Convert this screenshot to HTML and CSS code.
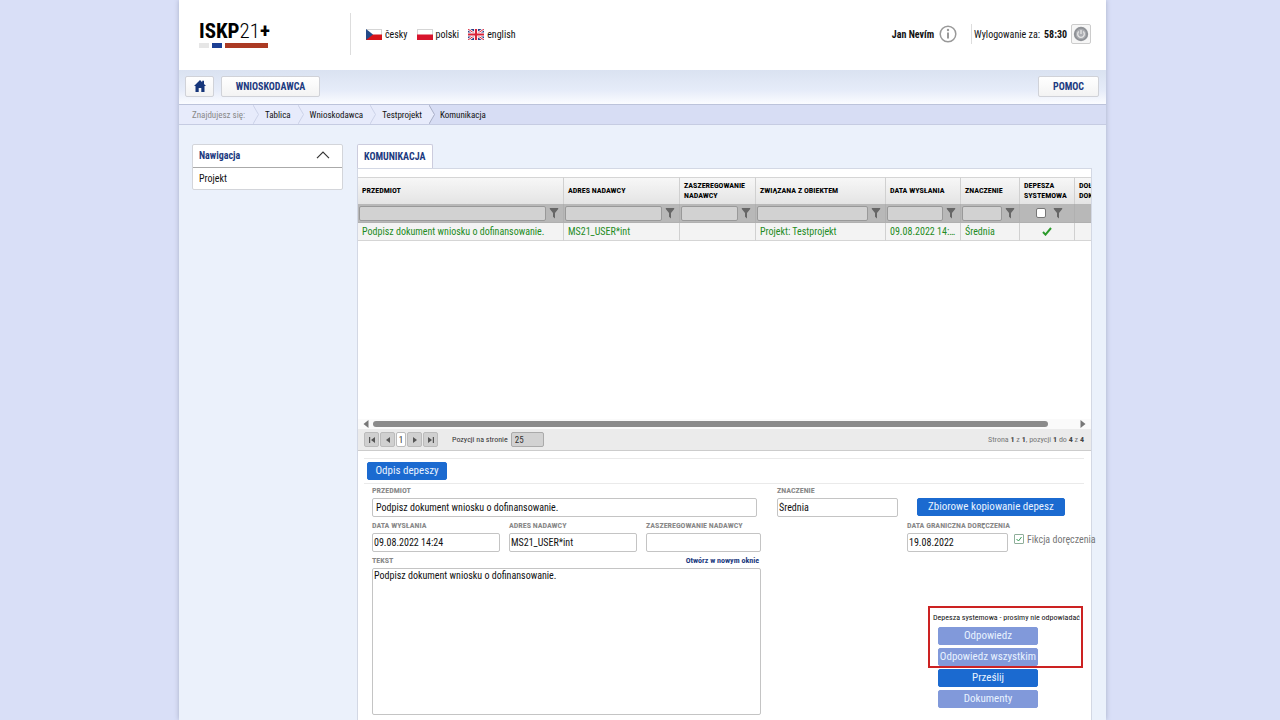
FILE: index.html
```html
<!DOCTYPE html>
<html lang="pl">
<head>
    <meta charset="UTF-8">
    <meta name="viewport" content="width=device-width, initial-scale=1.0">
    <title>ISKP21+</title>
    <link rel="stylesheet" href="styles.css">
</head>
<body>

<svg class="sprite" aria-hidden="true">
    <symbol id="funnel" viewBox="0 0 10 12">
        <path d="M0.8 1h8.4v1L6 6v5.4L4 9.8V6L0.8 2z" fill="#666"/>
    </symbol>
    <symbol id="chevron" viewBox="0 0 6 19">
        <path d="M0 0l5.5 9.5L0 19" fill="#e7ebfb" stroke="currentColor"/>
    </symbol>
</svg>

<div class="page">
    <header class="header">
        <div class="brand">
            <a href="#" class="logo">
                <span class="logo-text">ISKP<span class="logo-thin">21</span>+</span>
                <span class="logo-bars"><i class="bar-grey"></i><i class="bar-blue"></i><i class="bar-red"></i></span>
            </a>
        </div>
        <nav class="languages">
            <a href="#">
                <svg width="16" height="11" viewBox="0 0 16 11"><rect x=".5" y=".5" width="15" height="10" fill="#fff" stroke="#d5d5d5"/><rect y="5.5" width="16" height="5.5" fill="#d7141a"/><path d="M0 0l7 5.5L0 11z" fill="#234a88"/></svg>
                česky
            </a>
            <a href="#">
                <svg width="16" height="11" viewBox="0 0 16 11"><rect x=".5" y=".5" width="15" height="10" fill="#fff" stroke="#d5d5d5"/><rect y="5.5" width="16" height="5.5" fill="#d8142c"/></svg>
                polski
            </a>
            <a href="#">
                <svg width="16" height="11" viewBox="0 0 16 11"><rect width="16" height="11" fill="#2b3f86"/><path d="M0 0l16 11M16 0L0 11" stroke="#fff" stroke-width="2.6"/><path d="M0 0l16 11M16 0L0 11" stroke="#d8233a" stroke-width="1"/><path d="M8 0v11M0 5.5h16" stroke="#fff" stroke-width="4"/><path d="M8 0v11M0 5.5h16" stroke="#d8233a" stroke-width="2.2"/></svg>
                english
            </a>
        </nav>
        <div class="user">
            <b>Jan Nevím</b>
            <svg width="18" height="18" viewBox="0 0 18 18"><circle cx="9" cy="9" r="7.8" fill="#fff" stroke="#999" stroke-width="1.5"/><circle cx="9" cy="5" r="1.2" fill="#999"/><path d="M9 7.4v6" stroke="#999" stroke-width="2"/></svg>
        </div>
        <div class="session">
            <span>Wylogowanie za:</span>
            <b>58:30</b>
            <button class="logout" aria-label="Wyloguj">
                <svg width="16" height="16" viewBox="0 0 16 16"><circle cx="8" cy="8" r="7.2" fill="#8f9297"/><circle cx="8" cy="8" r="5.2" fill="#abadb2"/><path d="M5.8 5.6a3.3 3.3 0 1 0 4.4 0M8 4v4" fill="none" stroke="#e6e6e6" stroke-width="1.3"/></svg>
            </button>
        </div>
    </header>

    <nav class="menu">
        <button class="menu-button home" aria-label="Tablica">
            <svg width="12" height="12" viewBox="0 0 12 12"><path d="M6 0L0 6h1.5v6h3.2V8h2.6v4h3.2V6H12L10 4V.8H8.2v1.4z" fill="#15357a"/></svg>
        </button>
        <button class="menu-button wide">WNIOSKODAWCA</button>
        <button class="menu-button help">POMOC</button>
    </nav>

    <div class="breadcrumb">
        <span class="crumb label">Znajdujesz się:</span><svg width="6" height="19"><use href="#chevron"/></svg>
        <a href="#" class="crumb">Tablica</a><svg width="6" height="19"><use href="#chevron"/></svg>
        <a href="#" class="crumb">Wnioskodawca</a><svg width="6" height="19"><use href="#chevron"/></svg>
        <a href="#" class="crumb">Testprojekt</a><svg class="last" width="6" height="19"><use href="#chevron"/></svg>
        <span class="current">Komunikacja</span>
    </div>

    <div class="content">
        <aside class="sidebar">
            <button class="sidebar-title">
                Nawigacja
                <svg width="14" height="8" viewBox="0 0 14 8"><path d="M1 7.2L7 1.2l6 6" fill="none" stroke="#333" stroke-width="1.2"/></svg>
            </button>
            <a href="#" class="sidebar-item">Projekt</a>
        </aside>

        <main class="main">
            <a href="#" class="tab">KOMUNIKACJA</a>
            <div class="panel">
                <div class="grid">
                    <table>
                        <colgroup>
                            <col class="c-subject"><col class="c-sender"><col class="c-rank"><col class="c-object"><col class="c-date"><col class="c-importance"><col class="c-system"><col class="c-document">
                        </colgroup>
                        <thead>
                            <tr>
                                <th>PRZEDMIOT</th>
                                <th>ADRES NADAWCY</th>
                                <th>ZASZEREGOWANIE NADAWCY</th>
                                <th>ZWIĄZANA Z OBIEKTEM</th>
                                <th>DATA WYSŁANIA</th>
                                <th>ZNACZENIE</th>
                                <th>DEPESZA SYSTEMOWA</th>
                                <th>DOŁĄCZONE DOKUMENTY</th>
                            </tr>
                            <tr class="filters">
                                <td><div class="filter"><input type="text" aria-label="Przedmiot"><svg width="10" height="12"><use href="#funnel"/></svg></div></td>
                                <td><div class="filter"><input type="text" aria-label="Adres nadawcy"><svg width="10" height="12"><use href="#funnel"/></svg></div></td>
                                <td><div class="filter"><input type="text" aria-label="Zaszeregowanie nadawcy"><svg width="10" height="12"><use href="#funnel"/></svg></div></td>
                                <td><div class="filter"><input type="text" aria-label="Związana z obiektem"><svg width="10" height="12"><use href="#funnel"/></svg></div></td>
                                <td><div class="filter"><input type="text" aria-label="Data wysłania"><svg width="10" height="12"><use href="#funnel"/></svg></div></td>
                                <td><div class="filter"><input type="text" aria-label="Znaczenie"><svg width="10" height="12"><use href="#funnel"/></svg></div></td>
                                <td><div class="filter check"><input type="checkbox" aria-label="Depesza systemowa"><svg width="10" height="12"><use href="#funnel"/></svg></div></td>
                                <td><div class="filter check"><input type="checkbox" aria-label="Dołączone dokumenty"></div></td>
                            </tr>
                        </thead>
                        <tbody>
                            <tr>
                                <td>Podpisz dokument wniosku o dofinansowanie.</td>
                                <td>MS21_USER*int</td>
                                <td></td>
                                <td>Projekt: Testprojekt</td>
                                <td>09.08.2022 14:24</td>
                                <td>Średnia</td>
                                <td class="center"><svg width="10" height="9" viewBox="0 0 10 9"><path d="M1 5l2.5 2.6L9 1" fill="none" stroke="#2a9a2a" stroke-width="2"/></svg></td>
                                <td></td>
                            </tr>
                        </tbody>
                    </table>
                </div>
                <div class="scrollbar">
                    <svg width="6" height="8" viewBox="0 0 6 8"><path d="M5.5 0v8L.5 4z" fill="#777"/></svg>
                    <div class="track"><div class="thumb"></div></div>
                    <svg width="6" height="8" viewBox="0 0 6 8"><path d="M.5 0v8l5-4z" fill="#777"/></svg>
                </div>
                <div class="pager">
                    <div class="pages">
                        <button aria-label="Pierwsza"><svg width="8" height="8" viewBox="0 0 8 8"><path d="M1 1h1.2v6H1zM7 1v6L3 4z" fill="#555"/></svg></button>
                        <button aria-label="Poprzednia"><svg width="8" height="8" viewBox="0 0 8 8"><path d="M6 1v6L2 4z" fill="#555"/></svg></button>
                        <button class="active">1</button>
                        <button aria-label="Następna"><svg width="8" height="8" viewBox="0 0 8 8"><path d="M2 1v6l4-3z" fill="#555"/></svg></button>
                        <button aria-label="Ostatnia"><svg width="8" height="8" viewBox="0 0 8 8"><path d="M5.8 1H7v6H5.8zM1 1v6l4-3z" fill="#555"/></svg></button>
                    </div>
                    <label for="pageSize">Pozycji na stronie</label>
                    <input type="text" id="pageSize" value="25">
                    <div class="summary">Strona <b>1</b> z <b>1</b>, pozycji <b>1</b> do <b>4</b> z <b>4</b></div>
                </div>

                <div class="toolbar">
                    <button class="button">Odpis depeszy</button>
                </div>

                <form class="form">
                    <div class="form-left">
                        <div class="field subject">
                            <label for="subject">PRZEDMIOT</label>
                            <input type="text" id="subject" value="Podpisz dokument wniosku o dofinansowanie.">
                        </div>
                        <div class="row">
                            <div class="field sent">
                                <label for="sent">DATA WYSŁANIA</label>
                                <input type="text" id="sent" value="09.08.2022 14:24">
                            </div>
                            <div class="field sent">
                                <label for="sender">ADRES NADAWCY</label>
                                <input type="text" id="sender" value="MS21_USER*int">
                            </div>
                            <div class="field grow">
                                <label for="rank">ZASZEREGOWANIE NADAWCY</label>
                                <input type="text" id="rank">
                            </div>
                        </div>
                        <div class="field">
                            <div class="text-head">
                                <label for="text">TEKST</label>
                                <a href="#">Otwórz w nowym oknie</a>
                            </div>
                            <textarea id="text">Podpisz dokument wniosku o dofinansowanie.</textarea>
                        </div>
                    </div>
                    <div class="field importance">
                        <label for="importance">ZNACZENIE</label>
                        <input type="text" id="importance" value="Średnia">
                    </div>
                    <div class="form-right">
                        <button type="button" class="button copy">Zbiorowe kopiowanie depesz</button>
                        <div class="row deadline">
                            <div class="field">
                                <label for="deadline">DATA GRANICZNA DORĘCZENIA</label>
                                <input type="text" id="deadline" value="19.08.2022">
                            </div>
                            <label class="fiction"><input type="checkbox" checked>Fikcja doręczenia</label>
                        </div>
                        <div class="actions">
                            <p>Depesza systemowa - prosimy nie odpowiadać</p>
                            <button type="button" class="button off">Odpowiedz</button>
                            <button type="button" class="button off">Odpowiedz wszystkim</button>
                            <button type="button" class="button">Prześlij</button>
                            <button type="button" class="button off">Dokumenty</button>
                            <div class="highlight"></div>
                        </div>
                    </div>
                </form>
            </div>
        </main>
    </div>
</div>

</body>
</html>
```
FILE: styles.css
```css
* {
    box-sizing: border-box;
}
body {
    margin: 0;
    background-color: #d9dff7;
    font-family: "Roboto Condensed", "Liberation Sans Narrow", Roboto, sans-serif;
    font-size: 10px;
    color: #111;
}
a {
    color: inherit;
    text-decoration: none;
}
button, input, textarea {
    font-family: inherit;
    font-size: inherit;
    color: inherit;
    margin: 0;
    padding: 0;
}
button {
    cursor: pointer;
}
svg {
    display: block;
    flex: none;
}
.sprite {
    width: 0;
    height: 0;
    position: absolute;
}
.page {
    display: flex;
    flex-direction: column;
    min-height: 100vh;
    margin: 0 174px 0 179px;
    background-color: #ebf1fb;
    box-shadow: 0 0 5px #a9afc8;
}

/* header */
.header {
    display: flex;
    align-items: center;
    height: 70px;
    padding: 0 15px 2px 20px;
    background-color: #fff;
}
.brand {
    width: 152px;
    height: 42px;
    border-right: 1px solid #ddd;
    padding-top: 8px;
}
.logo {
    display: block;
    width: 69px;
}
.logo-text {
    display: block;
    font-size: 21px;
    line-height: 20px;
    font-weight: bold;
    color: #000;
}
.logo-thin {
    font-weight: 300;
}
.logo-bars {
    display: flex;
    gap: 3px;
    height: 5px;
    margin-top: 2px;
}
.bar-grey {
    width: 10px;
    background-color: #e6e6e6;
}
.bar-blue {
    width: 10px;
    background-color: #1c3f94;
}
.bar-red {
    flex: 1;
    background-color: #ab3a23;
}
.languages {
    display: flex;
    gap: 9px;
    margin-left: 15px;
}
.languages a {
    display: flex;
    align-items: center;
    gap: 3px;
}
.user {
    display: flex;
    align-items: center;
    gap: 5px;
    margin-left: auto;
}
.session {
    display: flex;
    align-items: center;
    gap: 4px;
    height: 20px;
    margin-left: 14px;
    padding-left: 2px;
    border-left: 1px solid #ddd;
}
.logout {
    display: flex;
    align-items: center;
    justify-content: center;
    width: 20px;
    height: 20px;
    background-color: #f6f6f6;
    border: 1px solid #ccc;
    border-radius: 2px;
}

/* menu */
.menu {
    display: flex;
    align-items: center;
    gap: 7px;
    height: 34px;
    padding: 0 7px 2px 6px;
    background: linear-gradient(#dae2f1, #e6ecf9 60%, #fbfcff);
}
.menu-button {
    height: 21px;
    font-weight: bold;
    color: #1c3a80;
    background: linear-gradient(#fff, #f3f3f3);
    border: 1px solid #d0d2d8;
    border-radius: 2px;
}
.home {
    display: flex;
    align-items: center;
    justify-content: center;
    width: 29px;
}
.wide {
    width: 99px;
}
.help {
    width: 61px;
    margin-left: auto;
}

/* breadcrumb */
.breadcrumb {
    display: flex;
    height: 21px;
    line-height: 20px;
    font-size: 9px;
    background-color: #d7ddf4;
    border-top: 1px solid #bcc3da;
    border-bottom: 1px solid #c6cce2;
}
.breadcrumb svg {
    color: #ccd2e8;
    background-color: #e7ebfb;
}
.breadcrumb .last {
    color: #a9afc6;
    background: none;
}
.crumb {
    padding: 0 7px 0 6px;
    background-color: #e7ebfb;
}
.crumb.label {
    padding-left: 13px;
    padding-right: 8px;
    color: #888;
}
.current {
    padding-left: 5px;
}

/* content */
.content {
    display: flex;
    flex: 1;
    align-items: stretch;
    gap: 14px;
    padding: 19px 14px 0 13px;
}
.sidebar {
    align-self: flex-start;
    width: 151px;
    background-color: #fff;
    border: 1px solid #d3d5da;
    border-radius: 2px;
}
.sidebar-title {
    display: flex;
    align-items: center;
    justify-content: space-between;
    width: 100%;
    height: 23px;
    padding: 0 12px 2px 6px;
    font-weight: bold;
    color: #1c3a80;
    background: none;
    border: 0;
    border-bottom: 1px solid #aaa;
}
.sidebar-item {
    display: block;
    padding: 0 6px;
    line-height: 21px;
}
.main {
    display: flex;
    flex-direction: column;
    flex: 1;
    min-width: 0;
}
.tab {
    align-self: flex-start;
    height: 24px;
    padding: 0 7px 0 6px;
    line-height: 24px;
    font-weight: bold;
    color: #1c3a80;
    background-color: #fff;
    border: 1px solid #ccd;
    border-bottom: 0;
    border-radius: 2px 2px 0 0;
}
.panel {
    flex: 1;
    padding-top: 8px;
    background-color: #fff;
    border: 1px solid #d3d8e4;
    border-bottom: 0;
}

/* table */
.grid {
    height: 242px;
    overflow: hidden;
}
table {
    width: 791px;
    table-layout: fixed;
    border-collapse: separate;
    border-spacing: 0;
}
.c-subject { width: 206px; }
.c-sender { width: 116px; }
.c-rank { width: 76px; }
.c-object { width: 130px; }
.c-date { width: 75px; }
.c-importance { width: 59px; }
.c-system { width: 55px; }
th, td {
    border-right: 1px solid #d0d0d0;
}
th {
    height: 27px;
    padding: 0 4px;
    font-size: 8px;
    line-height: 10px;
    text-align: left;
    color: #000;
    background: linear-gradient(#f7f7f7, #e4e4e4);
    border-top: 1px solid #d5d5d5;
}
td {
    height: 18px;
    padding: 0 4px;
    line-height: 17px;
    color: #238b23;
    white-space: nowrap;
    overflow: hidden;
    text-overflow: ellipsis;
    background-color: #f3f3f3;
    border-bottom: 1px solid #d5d5d5;
}
.filters td {
    height: 19px;
    padding: 0 4px 0 1px;
    background-color: #b8b8b8;
    border-color: #b0b0b0;
}
.filter {
    display: flex;
    align-items: center;
    gap: 3px;
}
.filter input[type="text"] {
    flex: 1;
    min-width: 0;
    height: 15px;
    background-color: #d2d2d2;
    border: 1px solid #999;
    border-radius: 2px;
}
.filter.check {
    gap: 7px;
    padding-left: 15px;
}
.filter input[type="checkbox"] {
    appearance: none;
    flex: none;
    width: 10px;
    height: 10px;
    background-color: #fff;
    border: 1px solid #777;
    border-radius: 2px;
}
.center svg {
    margin: 0 auto;
}

/* scrollbar and pager */
.scrollbar {
    display: flex;
    align-items: center;
    gap: 4px;
    height: 10px;
    padding: 0 5px;
    background-color: #fafafa;
}
.track {
    flex: 1;
}
.thumb {
    width: 96%;
    height: 6px;
    background-color: #8b8b8b;
    border-radius: 3px;
}
.pager {
    display: flex;
    align-items: center;
    height: 22px;
    padding: 0 7px 0 6px;
    font-size: 8px;
    color: #333;
    background-color: #ebebeb;
    border-bottom: 1px solid #ccc;
}
.pages {
    display: flex;
    gap: 1px;
    margin-right: 14px;
}
.pages button {
    display: flex;
    align-items: center;
    justify-content: center;
    width: 15px;
    height: 15px;
    background-color: #d0d0d0;
    border: 1px solid #bbb;
    border-radius: 2px;
}
.pages .active {
    width: 10px;
    font-size: 9px;
    background-color: #fff;
}
.pager input {
    width: 33px;
    height: 15px;
    margin-left: 3px;
    padding-left: 3px;
    font-size: 9px;
    background-color: #d2d2d2;
    border: 1px solid #aaa;
    border-radius: 2px;
}
.summary {
    margin-left: auto;
    color: #777;
}
.summary b {
    color: #444;
}

/* message form */
.button {
    height: 18px;
    font-size: 11px;
    line-height: 16px;
    color: #e8f2ff;
    background-color: #1b6ad0;
    border: 1px solid #1b6ad0;
    border-radius: 2px;
    white-space: nowrap;
}
.button.off {
    background-color: #8199da;
    border-color: #8199da;
}
.toolbar {
    margin: 7px 7px 0 6px;
    padding: 3px;
    border-top: 1px solid #eaeaea;
    border-bottom: 1px solid #eaeaea;
}
.toolbar .button {
    display: block;
    width: 80px;
}
.form {
    display: flex;
    padding-left: 14px;
}
.form-left {
    display: flex;
    flex-direction: column;
    gap: 2px;
    width: 389px;
}
.row {
    display: flex;
    gap: 9px;
}
.field label, .text-head {
    display: block;
    font-size: 8px;
    line-height: 14px;
    font-weight: bold;
    color: #888;
    white-space: nowrap;
}
.field input {
    display: block;
    width: 100%;
    height: 19px;
    padding: 0 1px;
    line-height: 17px;
    border: 1px solid #c4c4c4;
    border-radius: 2px;
}
.field.subject {
    padding-right: 4px;
}
.field.subject input {
    padding: 0 3px;
}
.field.sent {
    width: 128px;
}
.grow {
    flex: 1;
}
.text-head {
    display: flex;
    justify-content: space-between;
    padding-right: 2px;
}
.text-head a {
    color: #1c3a80;
}
textarea {
    display: block;
    width: 100%;
    height: 147px;
    padding: 1px;
    border: 1px solid #c4c4c4;
    border-radius: 2px;
    resize: none;
}
.importance {
    width: 121px;
    margin-left: 16px;
}
.form-right {
    flex: 1;
    min-width: 0;
    margin-left: 9px;
    padding-top: 14px;
}
.copy {
    display: block;
    width: 148px;
    margin-left: 10px;
}
.deadline {
    gap: 6px;
    margin-top: 3px;
    white-space: nowrap;
}
.deadline .field {
    flex: none;
    width: 101px;
}
.fiction {
    display: flex;
    align-items: center;
    gap: 3px;
    padding-top: 7px;
    font-size: 10px;
    color: #777;
}
.fiction input {
    appearance: none;
    flex: none;
    width: 10px;
    height: 10px;
    background: url("data:image/svg+xml,%3Csvg xmlns='http://www.w3.org/2000/svg' viewBox='0 0 8 8'%3E%3Cpath d='M1.5 4l2 2 3-4' fill='none' stroke='%23359a55'/%3E%3C/svg%3E");
    border: 1px solid #8fae9a;
    border-radius: 1px;
}
.actions {
    position: relative;
    display: flex;
    flex-direction: column;
    align-items: flex-start;
    gap: 3px;
    width: 155px;
    margin: 54px 0 0 21px;
    padding: 6px 0 10px 10px;
}
.actions p {
    margin: 0 0 0 -5px;
    font-size: 8px;
    line-height: 12px;
    white-space: nowrap;
}
.actions .button {
    width: 100px;
}
.highlight {
    position: absolute;
    top: 0;
    left: 0;
    right: 0;
    height: 62px;
    border: 2px solid #cc2222;
    pointer-events: none;
}
```
